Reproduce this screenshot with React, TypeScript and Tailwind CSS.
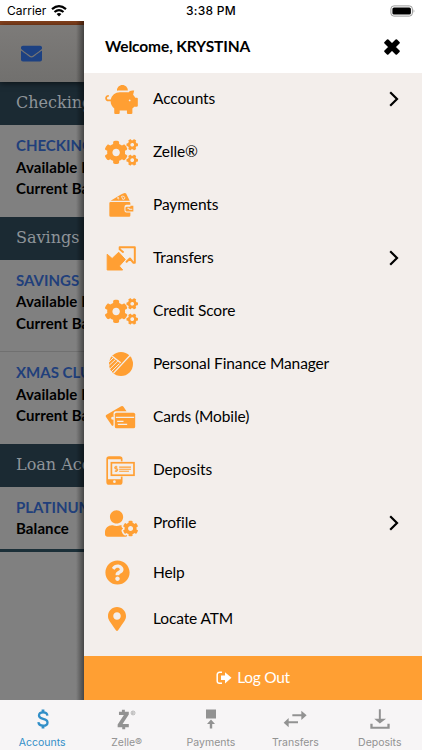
import React from 'react';
import {
  FaCogs,
  FaEnvelope,
  FaMapMarkerAlt,
  FaPiggyBank,
  FaQuestionCircle,
  FaUserCog,
} from 'react-icons/fa';

function WalletIcon() {
  return (
    <svg viewBox="56 36 76 78" className="w-[25px] h-[26px] ml-1" fill="currentColor">
      <path d="M61 62 91 44Q104 36 108 40L119 62Z" />
      <path d="M86 53q-5-3-4 1t5 2M94 49l4 9q7 0 6-5t-6-5z" fill="none" stroke="#f3eeeb" strokeWidth="2.5" />
      <path d="M61 66H117Q121 66 121 70V74H108Q103 75 103 81V91Q103 98 109 98H121V107Q121 111 117 111H61Q57 111 57 107V70Q57 66 61 66Z" />
      <path d="M121 77H130V95H110Q106 95 106 91V84Q106 80 110 80H121Z" />
      <path d="M112 85h5v3h10" fill="none" stroke="#f3eeeb" strokeWidth="3" />
    </svg>
  );
}

function SwapIcon() {
  return (
    <svg viewBox="48 196 90 76" className="w-[30px] h-[25px] ml-px" fill="currentColor">
      <path
        d="M51 221V269H98L88 257 106 237 86 215 66 234Z"
        stroke="currentColor"
        strokeWidth="3"
        strokeLinejoin="round"
      />
      <path
        d="M99 214 89 206V200H135V247H131L120 234 110 244"
        fill="none"
        stroke="currentColor"
        strokeWidth="6"
        strokeLinejoin="round"
        strokeLinecap="round"
      />
    </svg>
  );
}

function FinanceIcon() {
  return (
    <svg viewBox="0 0 74 74" className="w-6 h-6 ml-1">
      <circle cx="37" cy="37" r="37" fill="currentColor" />
      <path d="M10 13 36 33M71 4 14 65" stroke="#f3eeeb" strokeWidth="4" />
      <path d="M28 27-2 57M20 23-8 49M32 36 2 66M13 18-8 38" stroke="#f3eeeb" strokeWidth="3" />
    </svg>
  );
}

function CardsIcon() {
  return (
    <svg viewBox="46 30 92 72" className="w-[31px] h-6" fill="currentColor">
      <path d="M49 60 94 34Q98 31 101 35L110 49H78Q71 49 71 57V91L67 93 48 65Q47 62 49 60Z" />
      <path d="M72 66q-7-3-8 3t8 5z" fill="#f3eeeb" />
      <rect x="75" y="53" width="61" height="47" rx="5" />
      <path d="M78 67H133M82 79H101M84 88H112" stroke="#f3eeeb" strokeWidth="3.5" />
    </svg>
  );
}

function DepositIcon() {
  return (
    <svg viewBox="50 182 86 86" className="w-[29px] h-[29px] ml-px">
      <rect x="53.5" y="185" width="43" height="80" rx="6" fill="none" stroke="currentColor" strokeWidth="5" />
      <path d="M54 185H96V192H54ZM54 251H96V265H54Z" fill="currentColor" />
      <circle cx="75" cy="258" r="4" fill="#f3eeeb" />
      <rect x="62" y="198" width="74" height="45" fill="#f3eeeb" />
      <rect x="66" y="202" width="67" height="37" fill="none" stroke="currentColor" strokeWidth="5" />
      <path
        d="M84 215q-7-3-8 1t5 4 3 5-8 1M80 211v18M89 215H124M89 221H124M89 227H118"
        fill="none"
        stroke="currentColor"
        strokeWidth="3"
      />
    </svg>
  );
}

function ChevronIcon() {
  return (
    <svg viewBox="0 0 10 16" className="w-[10px] h-4" fill="none" stroke="#000" strokeWidth="2.2">
      <path d="M1.2 1.2 8 8 1.2 14.8" />
    </svg>
  );
}

function CloseIcon() {
  return (
    <svg
      viewBox="0 0 16 16"
      className="w-4 h-4"
      fill="#000"
      stroke="#000"
      strokeWidth="2"
      strokeLinejoin="round"
    >
      <path d="M3.7 1.2 8 5.5 12.3 1.2 14.8 3.7 10.5 8 14.8 12.3 12.3 14.8 8 10.5 3.7 14.8 1.2 12.3 5.5 8 1.2 3.7Z" />
    </svg>
  );
}

function LogOutIcon() {
  return (
    <svg viewBox="0 0 16 14" className="w-4 h-[14px]" fill="currentColor">
      <path d="M6 1.3H3.5A2.3 2.3 0 0 0 1.2 3.6V10a2.3 2.3 0 0 0 2.3 2.3H6" fill="none" stroke="currentColor" strokeWidth="1.5" />
      <path d="M5 4.6H9V1.2L15.5 6.8 9 12.4V9H5Z" />
    </svg>
  );
}

function DollarIcon() {
  return (
    <svg viewBox="0 0 12 20" className="w-3 h-5 ml-px" fill="none" stroke="currentColor" strokeWidth="2.3">
      <path d="M10.4 6.6C10.2 4.6 8.6 3.3 6.1 3.3 3.8 3.3 2 4.5 2 6.4 2 8.4 3.6 9.2 6.1 9.9 8.8 10.6 10.5 11.4 10.5 13.4 10.5 15.5 8.7 16.7 6.2 16.7 3.4 16.7 1.6 15.4 1.4 13.2" />
      <path d="M6 .5V3M6 17V19.5" strokeWidth="2.8" />
    </svg>
  );
}

function ZelleIcon() {
  return (
    <svg viewBox="350 176 58 62" className="w-[19px] h-[21px]" fill="currentColor">
      <path d="M356 183H365V177H374V183H386V192L367 221H386V231H375V237H366V231H352V222L371 193H356Z" />
      <circle cx="399" cy="187" r="6" fill="none" stroke="currentColor" strokeWidth="1.8" />
      <path d="M397 191v-7h3q2 2 0 4h-3M399 188l3 3" fill="none" stroke="currentColor" strokeWidth="1.3" />
    </svg>
  );
}

function PayIcon() {
  return (
    <svg viewBox="0 0 12 20" className="w-3 h-5" fill="currentColor">
      <path d="M1 .5H11V9.5H1ZM6 10.5 10 15H7.2V19.5H4.8V15H2Z" />
    </svg>
  );
}

function ArrowsIcon() {
  return (
    <svg viewBox="215 180 72 54" className="w-6 h-[18px]" fill="currentColor">
      <path d="M243 193H270V182L286 196 270 210V199H243ZM260 214H232V204L217 218 232 232V220H260Z" />
    </svg>
  );
}

function TrayIcon() {
  return (
    <svg viewBox="475 177 61 61" className="w-5 h-5" fill="currentColor">
      <path d="M502 178H508V207H524L505 221 488 207H502ZM476 222H483V231H528V222H535V237H476Z" />
    </svg>
  );
}

const menu = [
  { label: 'Accounts', icon: <FaPiggyBank className="w-[33px] h-[29px]" />, more: true },
  { label: 'Zelle®', icon: <FaCogs className="w-[33px] h-[27px]" /> },
  { label: 'Payments', icon: <WalletIcon /> },
  { label: 'Transfers', icon: <SwapIcon />, more: true },
  { label: 'Credit Score', icon: <FaCogs className="w-[33px] h-[27px]" /> },
  { label: 'Personal Finance Manager', icon: <FinanceIcon /> },
  { label: 'Cards (Mobile)', icon: <CardsIcon /> },
  { label: 'Deposits', icon: <DepositIcon /> },
  { label: 'Profile', icon: <FaUserCog className="w-[33px] h-[27px]" />, more: true },
  { label: 'Help', icon: <FaQuestionCircle className="w-[25px] h-[25px]" />, short: true },
  { label: 'Locate ATM', icon: <FaMapMarkerAlt className="w-6 h-6" />, short: true },
];

const tabs = [
  { label: 'Accounts', icon: <DollarIcon />, active: true },
  { label: 'Zelle®', icon: <ZelleIcon /> },
  { label: 'Payments', icon: <PayIcon /> },
  { label: 'Transfers', icon: <ArrowsIcon /> },
  { label: 'Deposits', icon: <TrayIcon /> },
];

function StatusBar() {
  return (
    <div className="h-[21px] shrink-0 grid grid-cols-3 items-center px-[7px] bg-white text-black font-['Inter',sans-serif] text-[12px]">
      <div className="flex items-center gap-[5px]">
        Carrier
        <svg viewBox="0 0 16 12" className="w-4 h-3" fill="none" stroke="#000" strokeWidth="2.2">
          <path d="M1 4.2Q8-1.8 15 4.2M3.5 7Q8 3.2 12.5 7" />
          <path d="M8 11.5 5.6 9Q8 7 10.4 9Z" fill="#000" stroke="none" />
        </svg>
      </div>
      <div className="text-center font-medium tracking-[0.3px]">3:38 PM</div>
      <svg viewBox="0 0 25 12" className="w-[25px] h-3 justify-self-end">
        <rect x=".9" y=".9" width="21.5" height="10.2" rx="3" fill="none" stroke="#999" />
        <rect x="2.4" y="2.4" width="18.5" height="7.2" rx="1.6" />
        <path d="M23.6 4.2q1.6 1.8 0 3.6z" fill="#999" />
      </svg>
    </div>
  );
}

function Band({ title }: { title: string }) {
  return (
    <div className="h-[43px] pl-4 pb-px flex items-center bg-[#1b2a33] text-[#8e9499] whitespace-nowrap font-['DejaVu_Serif',serif] text-[16px]">
      {title}
    </div>
  );
}

function Account({ name, lines }: { name: string; lines: string[] }) {
  return (
    <div className="pl-4 pt-[10px] pb-[17px] leading-[21.5px] whitespace-nowrap text-[15px] tracking-[0.1px] font-bold text-black">
      <div className="text-[#213f7b] tracking-normal">{name}</div>
      {lines.map((line) => (
        <div key={line}>{line}</div>
      ))}
    </div>
  );
}

function AccountList() {
  const balances = ['Available Balance', 'Current Balance'];
  return (
    <div className="w-[84px] shrink-0 overflow-hidden bg-[#808080] relative">
      <div className="h-1 bg-[#84401c]" />
      <div className="h-[57px] pl-[21px] flex items-center bg-linear-to-b from-[#7d7b79] to-[#71706e] shadow-[0_1px_6px_rgba(0,0,0,0.6)] relative">
        <FaEnvelope className="w-[21px] h-[21px] text-[#1d4182]" />
      </div>
      <Band title="Checking" />
      <Account name="CHECKING" lines={balances} />
      <Band title="Savings" />
      <Account name="SAVINGS" lines={balances} />
      <div className="border-t border-[#707070]">
        <Account name="XMAS CLUB" lines={balances} />
      </div>
      <Band title="Loan Accounts" />
      <div className="h-[65px] overflow-hidden border-b-[3px] border-[#1b2f38]">
        <Account name="PLATINUM" lines={['Balance']} />
      </div>
      <div className="absolute inset-y-0 right-0 w-2 bg-linear-to-r from-transparent to-black/45" />
    </div>
  );
}

function Drawer() {
  return (
    <div className="flex-1 flex flex-col bg-[#f3eeeb] text-black text-[15.5px] tracking-[-0.12px]">
      <div className="h-[52px] shrink-0 flex items-center justify-between pl-[21px] pr-[22px] pb-px bg-white font-bold">
        Welcome, KRYSTINA
        <CloseIcon />
      </div>
      <div className="flex-1">
        {menu.map((item) => (
          <div
            key={item.label}
            className={`flex items-center pl-5 pr-[23px] pb-px ${item.short ? 'h-[46px]' : 'h-[53px]'}`}
          >
            <div className="w-[49px] pl-px text-[#ff9f33]">{item.icon}</div>
            <span className="flex-1">{item.label}</span>
            {item.more && <ChevronIcon />}
          </div>
        ))}
      </div>
      <button className="h-11 flex items-center justify-center gap-[5px] bg-[#ff9f33] text-white tracking-[-0.3px]">
        <LogOutIcon />
        Log Out
      </button>
    </div>
  );
}

export default function App() {
  return (
    <div className="w-[422px] h-[750px] flex flex-col overflow-hidden font-['Lato',sans-serif]">
      <StatusBar />
      <div className="flex-1 min-h-0 flex">
        <AccountList />
        <Drawer />
      </div>
      <div className="h-[50px] shrink-0 grid grid-cols-5 bg-[#f7f5f6] font-['Inter',sans-serif] text-[10.5px]">
        {tabs.map((tab) => (
          <div
            key={tab.label}
            className={`flex flex-col items-center pt-[6px] ${tab.active ? 'text-[#328fc8]' : 'text-[#929292]'}`}
          >
            <div className="h-[26px] flex items-center">{tab.icon}</div>
            <span className="h-4 leading-[21px]">{tab.label}</span>
          </div>
        ))}
      </div>
    </div>
  );
}
